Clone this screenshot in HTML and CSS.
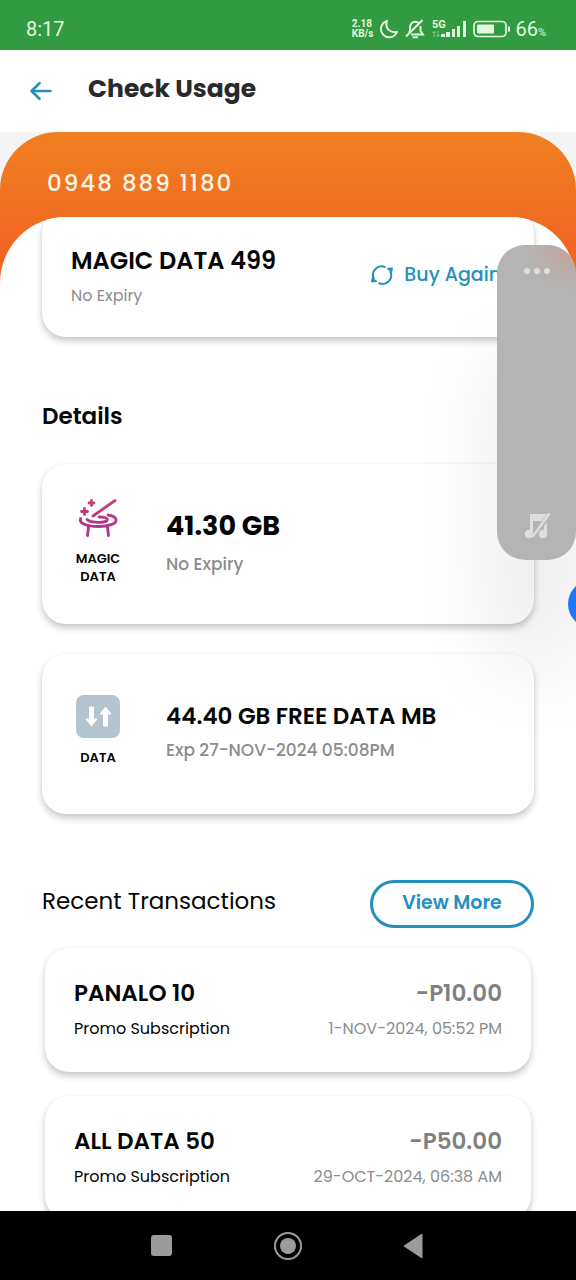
FILE: index.html
```
<!DOCTYPE html>
<html lang="en">
<head>
<meta charset="utf-8">
<meta name="viewport" content="width=device-width, initial-scale=1">
<title>Check Usage</title>
<link rel="stylesheet" href="styles.css">
</head>
<body>
<div class="app">
  <div class="status">
    <span class="clock">8:17</span>
    <div class="indicators">
      <div class="speed"><span>2.18</span><span>KB/s</span></div>
      <svg width="20" height="20" viewBox="0 0 20 20" fill="none" stroke="currentColor" stroke-width="2" stroke-linejoin="round"><path d="M8 2A8.300 8.300 0 1 0 18 13C11 14.500 5.500 9 8 2Z"/></svg>
      <svg class="bell" width="20" height="20" viewBox="0 0 20 20" fill="none" stroke="currentColor" stroke-width="1.900"><path d="M13.500 3.800C9 1.200 5 4 5 8.500V12L3.800 13.800M15.500 7V12L18 15.500H6M1 17.500 17.500 1"/><path d="M7.500 18.300H13"/></svg>
      <svg width="36" height="20" viewBox="0 0 36 20" fill="currentColor"><text class="net" x="1" y="9">5G</text><path opacity=".5" d="M3 12l2 2H3.700v4h-1v-4H1zM7 18l-2-2h1.500v-4h1v4H9z"/><path d="M10 15h4v3h-4zM15 13h4v5h-4zM21 10h3v8h-3zM26 7h3v11h-3zM32 2h3v16h-3z"/></svg>
      <svg class="battery" width="38" height="18" viewBox="0 0 38 18"><rect x="1" y="1.500" width="32" height="15" rx="4" fill="none" stroke="currentColor" stroke-width="1.700"/><rect x="4" y="4.500" width="17" height="9" rx="1" fill="currentColor"/><path d="M35 6.500h2v5h-2z" fill="currentColor"/></svg>
      <span class="level">66<small>%</small></span>
    </div>
  </div>

  <header class="topbar">
    <button class="back" type="button" aria-label="Back">
      <svg width="22" height="20" viewBox="0 0 22 20" fill="none" stroke="currentColor" stroke-width="2.600" stroke-linecap="round" stroke-linejoin="round"><path d="M20.500 10H1.800M9.500 2.200 1.500 10l8 7.800"/></svg>
    </button>
    <h1>Check Usage</h1>
  </header>

  <main class="screen">
    <section class="account">
      <p class="phone">0948 889 1180</p>
      <div class="sheet">
        <article class="card promo">
          <div>
            <h2 class="promo-name">MAGIC DATA 499</h2>
            <p class="muted small">No Expiry</p>
          </div>
          <button class="buy" type="button">
            <svg width="24" height="22" viewBox="0 0 24 22" fill="none" stroke="currentColor" stroke-width="2"><path d="M3.800 14.500A8.500 8.500 0 0 1 15.500 3.400M8.500 18.800A8.500 8.500 0 0 0 20.200 7.500"/><path d="M17 4.500 22.500 4 21.500 9.500 19.500 6.500ZM7 17.500 1.500 18 2.500 12.500 4.500 15.500Z" fill="currentColor" stroke-width="1"/></svg>
            <span>Buy Again</span>
          </button>
        </article>

        <h2 class="section-title">Details</h2>

        <article class="card balance">
          <div class="kind">
            <svg width="44" height="44" viewBox="0 0 44 44" fill="none" stroke="url(#wand)" stroke-width="2.800" stroke-linecap="round"><defs><linearGradient id="wand" gradientUnits="userSpaceOnUse" x1="0" y1="4" x2="0" y2="40"><stop offset="0" stop-color="#c64171"/><stop offset="1" stop-color="#a8329b"/></linearGradient></defs><path d="M17 20 39 4.500M15.500 4.500v5M13 7h5M8.500 12.500v6M5.500 15.500h6"/><path d="M4.500 22.500C3 28 12 30.500 22 30.500s19-2.500 18-7c-.7-3-4-4-8-4.500M11 23.500c2 2 6 2.800 12 2.800 8 0 11-3 6-4.800-2-.7-4-.5-6-.5M12.500 31l-1 8.500M31.500 31l1 8.500"/></svg>
            <span>MAGIC<br>DATA</span>
          </div>
          <div class="amount roomy">
            <h3 class="big">41.30 GB</h3>
            <p class="muted">No Expiry</p>
          </div>
        </article>

        <article class="card balance">
          <div class="kind">
            <svg width="44" height="44" viewBox="0 0 44 44"><rect width="44" height="43" rx="8" fill="#b3c4cf"/><path d="M13.500 12h4v12h3.500l-5.500 7-5.500-7h3.500zM27.500 31h4V19h3.500l-5.500-7-5.500 7h3.500z" fill="#fff" stroke="#fff" stroke-linejoin="round"/></svg>
            <span>DATA</span>
          </div>
          <div class="amount">
            <h3>44.40 GB FREE DATA MB</h3>
            <p class="muted">Exp 27-NOV-2024 05:08PM</p>
          </div>
        </article>

        <div class="recent">
          <h2>Recent Transactions</h2>
          <button class="more" type="button">View More</button>
        </div>

        <div class="transactions">
          <article class="card entry">
            <div class="row"><h3>PANALO 10</h3><span class="cost">-P10.00</span></div>
            <div class="row note"><span>Promo Subscription</span><time class="muted">1-NOV-2024, 05:52 PM</time></div>
          </article>
          <article class="card entry">
            <div class="row"><h3>ALL DATA 50</h3><span class="cost">-P50.00</span></div>
            <div class="row note"><span>Promo Subscription</span><time class="muted">29-OCT-2024, 06:38 AM</time></div>
          </article>
        </div>
      </div>
    </section>

    <aside class="volume">
      <button type="button" aria-label="More sound settings"><svg width="28" height="8" viewBox="0 0 28 8" fill="currentColor"><circle cx="4" cy="4" r="3"/><circle cx="14" cy="4" r="3"/><circle cx="24" cy="4" r="3"/></svg></button>
      <button type="button" aria-label="Mute media"><svg width="28" height="28" viewBox="0 0 28 28" fill="currentColor"><path d="M7 2h17l-5 7H10v13H7z"/><path d="M21 14l3-4v12h-3z"/><circle cx="6" cy="22" r="4.300"/><circle cx="20" cy="22" r="4.300"/><path d="M26.500 1.500 9.500 25" stroke="currentColor" stroke-width="2.500"/></svg></button>
    </aside>
    <button class="bubble" type="button" aria-label="Open side bubble"></button>
  </main>

  <nav class="system">
    <button type="button" aria-label="Recent apps"><svg width="30" height="30" viewBox="0 0 30 30"><rect x="4" y="4" width="21" height="21" rx="3" fill="currentColor"/></svg></button>
    <button type="button" aria-label="Home"><svg width="30" height="30" viewBox="0 0 30 30"><circle cx="15" cy="15" r="13" fill="none" stroke="currentColor" stroke-width="2"/><circle cx="15" cy="15" r="8" fill="currentColor"/></svg></button>
    <button type="button" aria-label="Go back"><svg width="30" height="30" viewBox="0 0 30 30"><path d="M5 15 23 3v24z" fill="currentColor" stroke="currentColor" stroke-linejoin="round"/></svg></button>
  </nav>
</div>
</body>
</html>
```

FILE: styles.css
```
* { box-sizing: border-box; }

body, h1, h2, h3, p { margin: 0; }

body {
  font-family: Poppins, Inter, "Open Sans", sans-serif;
  color: #050505;
  background: #fff;
}

button {
  border: 0;
  padding: 0;
  background: none;
  color: inherit;
  font: inherit;
  cursor: pointer;
}

svg { display: block; flex: none; }

.app {
  height: 100vh;
  display: grid;
  grid-template-rows: auto auto 1fr auto;
}

/* Status bar */
.status {
  display: flex;
  justify-content: space-between;
  align-items: center;
  padding: 12px 30px 4px 26px;
  height: 50px;
  background: #329b41;
  color: #e2f8dd;
  font-family: Roboto, sans-serif;
}

.clock { font-size: 20px; line-height: 24px; }

.indicators { display: flex; align-items: center; gap: 6px; }

.speed {
  display: flex;
  flex-direction: column;
  font-size: 10px;
  font-weight: 700;
  line-height: 10px;
}

.net { font-size: 11px; font-weight: 700; }

.level { font-size: 20px; line-height: 24px; margin-left: -2px; padding-top: 3px; }
.level small { font-size: 11px; }

/* Title bar */
.topbar {
  display: flex;
  align-items: center;
  gap: 36px;
  height: 82px;
  padding: 0 30px 4px;
}

.back { color: #2490bd; padding-top: 4px; }

.topbar h1 {
  font-size: 25px;
  line-height: 36px;
  font-weight: 700;
  color: #29292b;
}

/* Scrolling content */
.screen {
  position: relative;
  overflow: hidden;
  background: #f4f4f4;
}

.account {
  border-radius: 58px 58px 0 0;
  background: linear-gradient(#f08021, #f16522 120px);
}

.phone {
  padding: 33px 47px 16px;
  font-size: 23px;
  line-height: 36px;
  font-weight: 500;
  letter-spacing: 2px;
  color: #fff4e2;
}

.sheet {
  overflow: hidden;
  padding: 0 42px 24px;
  border-radius: 66px 66px 0 0;
  background: #fff;
}

.card {
  border-radius: 24px;
  background: #fff;
  box-shadow: 0 4px 7px rgba(0, 0, 0, .22), 0 0 3px rgba(0, 0, 0, .04);
}

.muted { color: #8c8c8c; }

.promo {
  display: flex;
  justify-content: space-between;
  align-items: center;
  margin-top: -8px;
  padding: 34px 33px 28px 29px;
}

.promo-name { font-size: 24px; line-height: 36px; font-weight: 600; }

.promo .small { margin-top: 4px; font-size: 16px; line-height: 26px; }

.buy {
  display: flex;
  align-items: center;
  gap: 10px;
  padding-bottom: 2px;
  color: #2490bd;
  font-size: 19px;
  line-height: 24px;
  font-weight: 500;
}

.section-title {
  margin: 63px 0 32px;
  font-size: 23px;
  line-height: 32px;
  font-weight: 600;
}

.balance {
  display: grid;
  grid-template-columns: 112px 1fr;
  align-items: center;
  gap: 12px;
  min-height: 160px;
  padding-bottom: 6px;
}

.balance + .balance { margin-top: 30px; }

.kind {
  display: flex;
  flex-direction: column;
  align-items: center;
  gap: 10px;
  text-align: center;
  font-size: 13px;
  line-height: 18px;
  font-weight: 600;
}

.amount { display: grid; gap: 6px; }
.amount h3 { font-size: 23px; line-height: 32px; font-weight: 600; }
.amount .big { font-size: 27px; font-weight: 700; }
.amount p { font-size: 17px; line-height: 24px; font-weight: 500; }
.roomy { gap: 10px; padding-top: 4px; }

.recent {
  display: flex;
  justify-content: space-between;
  align-items: center;
  margin-top: 66px;
}

.recent h2 { font-size: 23px; line-height: 32px; font-weight: 400; padding-bottom: 6px; }

.more {
  width: 164px;
  height: 48px;
  padding-bottom: 4px;
  border: 3px solid #2490bd;
  border-radius: 24px;
  color: #2490bd;
  font-size: 19px;
  font-weight: 600;
}

.transactions {
  display: grid;
  gap: 24px;
  padding: 20px 3px 0;
}

.entry { display: grid; gap: 8px; padding: 29px; padding-bottom: 31px; }

.row {
  display: flex;
  justify-content: space-between;
  font-size: 23px;
  line-height: 32px;
  font-weight: 600;
}

.row h3 { font: inherit; }
.cost { color: #808080; }
.note { font-size: 16px; line-height: 24px; font-weight: 400; }

/* System overlays */
.volume {
  position: absolute;
  top: 113px;
  right: 0;
  display: flex;
  flex-direction: column;
  justify-content: space-between;
  align-items: center;
  width: 79px;
  height: 315px;
  padding: 22px 0 20px;
  border-radius: 28px;
  background: radial-gradient(circle at 100% 0, #c0a298, #b4b4b4 50px);
  box-shadow: 0 110px 90px rgba(0, 0, 0, .09);
  color: #dedede;
}

.bubble {
  position: absolute;
  top: 448px;
  right: -40px;
  width: 48px;
  height: 48px;
  border-radius: 50%;
  background: #2176f5;
}

/* Navigation bar */
.system {
  display: flex;
  justify-content: center;
  align-items: center;
  gap: 96px;
  height: 69px;
  background: #000;
  color: #9b9b9b;
}
```
